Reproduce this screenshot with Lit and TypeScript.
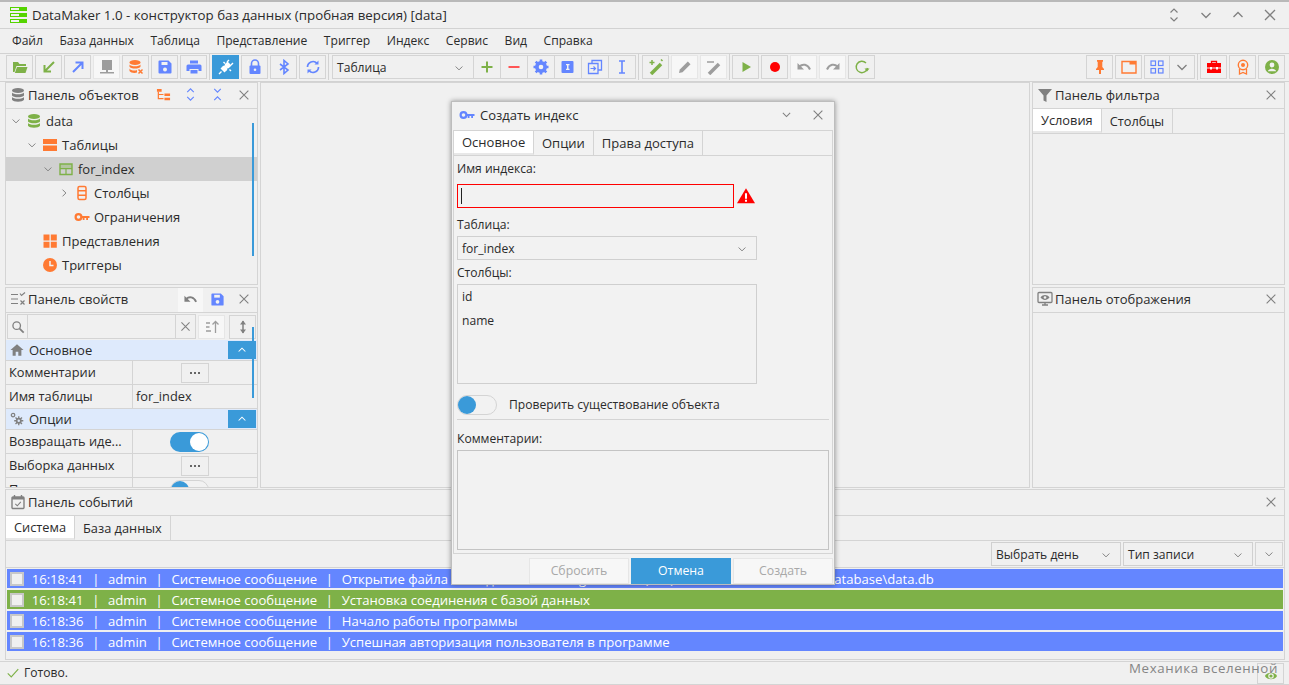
import { html, svg, css, LitElement } from "lit";
import { customElement } from "lit/decorators.js";

const OR = "#ff7a33";
const BL = "#6486ff";
const GR = "#7eb148";
const GY = "#808080";

const ICONS: Record<string, any> = {
  folder: svg`<path d="M1 3h5l1.500 2H14v2H4.500L2.500 13H1z" fill="${GR}"/><path d="M5 8h10.500l-2 6H2.800z" fill="${GR}"/>`,
  arrowIn: svg`<path d="M13 3 4 12M3.500 6v6.500H10" fill="none" stroke="${GR}" stroke-width="2"/>`,
  arrowOut: svg`<path d="M3 13 12 4M5.500 3.500H12.500V10" fill="none" stroke="${BL}" stroke-width="2"/>`,
  network: svg`<path d="M3 1h10v10H3zM7 11h2v2H7zM1 13h14v1.500H1z" fill="${GY}"/>`,
  dbx: svg`<ellipse cx="7" cy="3.500" rx="5.500" ry="2.500" fill="${OR}"/><path d="M1.500 5.500c1 2.400 10 2.400 11 0v2.300c-1 2.400-10 2.400-11 0zM1.500 9.500c1 2.400 6 2.400 7.500 1.500v2.500c-2 .9-6.500.5-7.500-1.500z" fill="${OR}"/><path d="M10.500 10.500l4 4m0-4l-4 4" stroke="${OR}" stroke-width="1.500"/>`,
  save: svg`<path d="M2.500 1.500h9l3 3v9a1 1 0 0 1-1 1h-11a1 1 0 0 1-1-1v-11a1 1 0 0 1 1-1z" fill="${BL}"/><path d="M4.500 3h6v3h-6z" fill="#f2f2f2"/><circle cx="8" cy="10.500" r="2" fill="#f2f2f2"/>`,
  print: svg`<path d="M4 1.500h8v3H4zM2 5.500h12a1.500 1.500 0 0 1 1.500 1.500v5H12.500v-2h-9v2H.5V7A1.500 1.500 0 0 1 2 5.500zM4.500 11h7v3.500h-7z" fill="${BL}"/>`,
  plug: svg`<g fill="#fff"><path d="M9.500 2.500l4 4-2.300 2.300a2 2 0 0 1-2.800 0L7.200 7.600a2 2 0 0 1 0-2.800z"/><path d="M6.500 13.500l-4-4 2.300-2.300a2 2 0 0 1 2.800 0l1.200 1.200a2 2 0 0 1 0 2.800z"/></g><path d="M11 1l-2 2m6 1l-2 2M1 15l2.500-2.500M7 4.500 5.500 3M11.500 10.500 13 12" stroke="#fff" stroke-width="1.400"/>`,
  lock: svg`<path d="M4.500 7V4.500a3.500 3.500 0 0 1 7 0V7" fill="none" stroke="${BL}" stroke-width="1.600"/><rect x="2.500" y="6.500" width="11" height="8.500" rx="1" fill="${BL}"/><circle cx="8" cy="10.800" r="1.300" fill="#f2f2f2"/>`,
  bt: svg`<path d="M4 5l8 6-4 3.500V1.500L12 5l-8 6" fill="none" stroke="${BL}" stroke-width="1.600"/>`,
  sync: svg`<path d="M2.500 8a5.500 5.500 0 0 1 9.500-3.700M13.500 8A5.500 5.500 0 0 1 4 11.700" fill="none" stroke="${BL}" stroke-width="1.700"/><path d="M13.500 1.500v4h-4zM2.500 14.500v-4h4z" fill="${BL}"/>`,
  plus: svg`<path d="M8 2.500v11M2.500 8h11" stroke="${GR}" stroke-width="2"/>`,
  minus: svg`<path d="M2.500 8h11" stroke="#f55" stroke-width="2"/>`,
  gear: svg`<circle cx="8" cy="8" r="4.500" fill="none" stroke="${BL}" stroke-width="3"/><path d="M8 .5v15M.5 8h15M2.700 2.700l10.600 10.600M13.300 2.700 2.700 13.300" stroke="${BL}" stroke-width="2.600"/><circle cx="8" cy="8" r="2.300" fill="#f2f2f2"/>`,
  info: svg`<rect x="1.500" y="2" width="12" height="12" rx="1" fill="${BL}"/><path d="M6 5h3.500v1.200H8.500v3.600h1V11H6V9.800h1V6.200H6z" fill="#f2f2f2"/>`,
  copy: svg`<path d="M5 4.500V1.500h9.500V11H11.500M1.500 4.500H11V14.500H1.500z" fill="none" stroke="${BL}" stroke-width="1.300"/><path d="M3.500 9.500h5m-2-2 2 2-2 2" fill="none" stroke="${BL}" stroke-width="1.200"/>`,
  cursor: svg`<path d="M5 2h6M5 14h6M8 2v12" fill="none" stroke="${BL}" stroke-width="1.600"/>`,
  wand: svg`<path d="M3 15 13 5" stroke="${GR}" stroke-width="3.500"/><path d="M4 1v5M1.500 3.500h5M13 .5l1.500 1.500" stroke="${GR}" stroke-width="1.500"/>`,
  pencil: svg`<path d="M2 14l.8-3.500L10.800 2.500l2.700 2.700-8 8z" fill="${GY}"/>`,
  wandGray: svg`<path d="M3 15 13 5" stroke="${GY}" stroke-width="3.500"/><path d="M1 3h7" stroke="${GY}" stroke-width="1.500"/>`,
  play: svg`<path d="M4.500 3v10l8.500-5z" fill="${GR}"/>`,
  rec: svg`<circle cx="8" cy="8" r="5" fill="#f00"/>`,
  undo: svg`<path d="M3.500 7.500c3-3 8-2.500 10.500 3" fill="none" stroke="${GY}" stroke-width="2"/><path d="M1.500 4v6.500H8z" fill="${GY}"/>`,
  redo: svg`<path d="M12.500 7.500c-3-3-8-2.500-10.500 3" fill="none" stroke="${GY}" stroke-width="2"/><path d="M14.500 4v6.500H8z" fill="${GY}"/>`,
  refresh: svg`<path d="M13.500 9A5.700 5.700 0 1 1 12 4" fill="none" stroke="${GR}" stroke-width="1.400"/><path d="M10.500 9.500h5L13 12.500z" fill="${GR}"/>`,
  pin: svg`<path d="M5 1h6v1.500l-.7.500v5l1.700 2v1H9v4H7v-4H4v-1l1.700-2V3L5 2.500z" fill="${OR}"/>`,
  win: svg`<path d="M1 2.500h14v11.500H1z" fill="none" stroke="${OR}" stroke-width="1.400"/><path d="M8.500 2.500H15v3H8.500z" fill="${OR}"/>`,
  grid: svg`<g fill="none" stroke="${BL}" stroke-width="1.200"><rect x="2" y="2" width="4.500" height="4.500"/><rect x="9.500" y="2" width="4.500" height="4.500"/><rect x="2" y="9.500" width="4.500" height="4.500"/><rect x="9.500" y="9.500" width="4.500" height="4.500"/></g>`,
  box: svg`<path d="M5.500 4V2.500h5V4" fill="none" stroke="#f00" stroke-width="1.300"/><path d="M1 4h14v4.500H1zM1 9.500h14V14H1z" fill="#f00"/><path d="M4 8h2v2.500H4zM10 8h2v2.500h-2z" fill="#fff"/>`,
  award: svg`<circle cx="8" cy="6" r="4.700" fill="none" stroke="${OR}" stroke-width="1.400"/><circle cx="8" cy="6" r="2" fill="${OR}"/><path d="M4.500 10v5l3.500-1.500 3.500 1.500v-5" fill="none" stroke="${OR}" stroke-width="1.300"/>`,
  user: svg`<circle cx="8" cy="8" r="7" fill="${GR}"/><circle cx="8" cy="6" r="2.400" fill="#f2f2f2"/><path d="M3.800 12.300c.8-3.400 7.600-3.400 8.400 0z" fill="#f2f2f2"/>`,
  db: svg`<ellipse cx="8" cy="3.500" rx="6" ry="2.500" fill="${GR}"/><path d="M2 5.500c1 2.400 11 2.400 12 0v3c-1 2.400-11 2.400-12 0zM2 10c1 2.400 11 2.400 12 0v2.700c-1 2.600-11 2.600-12 0z" fill="${GR}"/>`,
  dbGray: svg`<ellipse cx="8" cy="3.500" rx="6" ry="2.500" fill="${GY}"/><path d="M2 5.500c1 2.400 11 2.400 12 0v3c-1 2.400-11 2.400-12 0zM2 10c1 2.400 11 2.400 12 0v2.700c-1 2.600-11 2.600-12 0z" fill="${GY}"/>`,
  tables: svg`<path d="M1 2h14v5H1zM1 8.500h14V14H1z" fill="${OR}"/>`,
  table: svg`<path d="M2 3h12v10.500H2z" fill="none" stroke="${GR}" stroke-width="1.400"/><path d="M2 7h12v1.200H2zM7.400 7h1.200v6H7.400z" fill="${GR}"/><path d="M2 3h12v4H2z" fill="${GR}" opacity=".35"/>`,
  cols: svg`<rect x="4" y="1.500" width="8" height="13" rx="1.500" fill="none" stroke="${OR}" stroke-width="1.500"/><path d="M4 5.800h8M4 10.200h8" stroke="${OR}" stroke-width="1.500"/>`,
  key: svg`<circle cx="4.500" cy="8" r="2.900" fill="none" stroke="${OR}" stroke-width="2.200"/><path d="M7 7h8.500v2H14v2h-1.800V9H10.500v2H8.700V9H7z" fill="${OR}"/>`,
  keyBlue: svg`<circle cx="4.500" cy="8" r="2.900" fill="none" stroke="${BL}" stroke-width="2.200"/><path d="M7 7h8.500v2H14v2h-1.800V9H10.500v2H8.700V9H7z" fill="${BL}"/>`,
  views: svg`<path d="M1.500 1.500h6v6h-6zM8.800 1.500h6v6h-6zM1.500 8.800h6v6h-6zM8.800 8.800h6v6h-6z" fill="${OR}"/>`,
  clock: svg`<circle cx="8" cy="8" r="7" fill="${OR}"/><path d="M8 4v4.500h3.500" fill="none" stroke="#f2f2f2" stroke-width="1.500"/>`,
  treeOr: svg`<path d="M1 2h5v3H1zM9 7h6v2.500H9zM9 11.500h6V14H9z" fill="${OR}"/><path d="M2.500 5v7.500H8M2.500 8H8" fill="none" stroke="${OR}" stroke-width="1.300"/>`,
  expand: svg`<path d="M4.500 5.500 8 2l3.500 3.500M4.500 10.500 8 14l3.500-3.500" fill="none" stroke="${BL}" stroke-width="1.200"/>`,
  collapse: svg`<path d="M4.500 2 8 5.500 11.500 2M4.500 14 8 10.500 11.500 14" fill="none" stroke="${BL}" stroke-width="1.200"/>`,
  updown: svg`<path d="M4.500 5.500 8 2l3.500 3.500M4.500 10.500 8 14l3.500-3.500" fill="none" stroke="${GY}" stroke-width="1.200"/>`,
  chevDown: svg`<path d="M3.500 6 8 10.500 12.500 6" fill="none" stroke="${GY}" stroke-width="1.300"/>`,
  chevUp: svg`<path d="M3.500 10 8 5.500 12.500 10" fill="none" stroke="${GY}" stroke-width="1.300"/>`,
  chevUpW: svg`<path d="M3.500 10 8 5.500 12.500 10" fill="none" stroke="#fff" stroke-width="1.400"/>`,
  chevRight: svg`<path d="M6 3.500 10.500 8 6 12.500" fill="none" stroke="${GY}" stroke-width="1.300"/>`,
  close: svg`<path d="M3 3l10 10M13 3 3 13" stroke="${GY}" stroke-width="1.300"/>`,
  props: svg`<path d="M1 3.500h7M1 8h7M1 12.500h7" stroke="${GY}" stroke-width="1.200"/><path d="M10 2.500l1.500 2L15 1.500M10.500 9.500l4 4m0-4-4 4" fill="none" stroke="${GY}" stroke-width="1.200"/>`,
  search: svg`<circle cx="6.500" cy="6.500" r="4.300" fill="none" stroke="${GY}" stroke-width="1.500"/><path d="M9.800 9.800 14.500 14.500" stroke="${GY}" stroke-width="2"/>`,
  sortUp: svg`<path d="M2 4h4M2 8h3.500M2 12h5M11.500 14V3M8.500 5.500l3-3 3 3" fill="none" stroke="${GY}" stroke-width="1.300"/>`,
  resize: svg`<path d="M8 2v12" stroke="${GY}" stroke-width="1.500"/><path d="M5 5.500 8 1.500l3 4zM5 10.500l3 4 3-4z" fill="${GY}"/>`,
  home: svg`<path d="M8 1.500 15.500 8H13v6.500H9.500V10h-3v4.500H3V8H.5z" fill="${GY}"/>`,
  cogs: svg`<circle cx="3.500" cy="3.500" r="2" fill="none" stroke="${GY}" stroke-width="1.400"/><circle cx="10" cy="10" r="3.300" fill="${GY}"/><path d="M10 4.800v10.400M4.800 10h10.400M6.300 6.300l7.400 7.400M13.700 6.300l-7.400 7.400" stroke="${GY}" stroke-width="1.500"/><circle cx="10" cy="10" r="1.400" fill="#deeafc"/>`,
  filter: svg`<path d="M1 2h14L9.500 8.500V15l-3-1.500v-5z" fill="${GY}"/>`,
  monitor: svg`<rect x="1" y="1.500" width="14" height="10" rx="1" fill="none" stroke="${GY}" stroke-width="1.300"/><path d="M3.500 6.500C6 3.300 10 3.300 12.500 6.500 10 9.700 6 9.700 3.500 6.500z" fill="${GY}"/><circle cx="8" cy="6.500" r="1.300" fill="#f2f2f2"/><path d="M5 14h6M8 11.500V14" stroke="${GY}" stroke-width="1.300"/>`,
  calendar: svg`<rect x="2" y="3" width="12" height="11.500" rx="1" fill="none" stroke="${GY}" stroke-width="1.400"/><path d="M2 3h12v2.500H2z" fill="${GY}"/><path d="M4.500 1v2M11.500 1v2" stroke="${GY}" stroke-width="1.400"/><path d="M5.300 9.800l2 2 3.500-4" fill="none" stroke="${GY}" stroke-width="1.100"/>`,
  warn: svg`<path d="M8 1 16 14.500H0z" fill="#f00"/><path d="M7.100 5.500h1.800v5H7.100zM7.100 11.400h1.800v1.700H7.100z" fill="#fff"/>`,
  check: svg`<path d="M2 8.500 6 12.500 14 3.500" fill="none" stroke="${GR}" stroke-width="1.300"/>`,
  eye: svg`<path d="M1 8c3-5 11-5 14 0-3 5-11 5-14 0z" fill="${GR}"/><circle cx="8" cy="8" r="2.500" fill="none" stroke="#f2f2f2" stroke-width="1.300"/>`,
};

const icon = (name: string, size = 16) =>
  html`<svg class="ic" width=${size} height=${size} viewBox="0 0 16 16">${ICONS[name]}</svg>`;

const MENU = ["Файл", "База данных", "Таблица", "Представление", "Триггер", "Индекс", "Сервис", "Вид", "Справка"];
const TREE = [
  { level: 0, arrow: "chevDown", ic: "db", text: "data" },
  { level: 1, arrow: "chevDown", ic: "tables", text: "Таблицы" },
  { level: 2, arrow: "chevDown", ic: "table", text: "for_index", active: true },
  { level: 3, arrow: "chevRight", ic: "cols", text: "Столбцы" },
  { level: 3, arrow: "", ic: "key", text: "Ограничения" },
  { level: 1, arrow: "", ic: "views", text: "Представления" },
  { level: 1, arrow: "", ic: "clock", text: "Триггеры" },
];
const LOG = [
  { c: "blue", t: "16:18:41", m: "Открытие файла базы данных: C:\\Program Files (x86)\\DataMaker 1.0\\services\\database\\data.db" },
  { c: "green", t: "16:18:41", m: "Установка соединения с базой данных" },
  { c: "blue", t: "16:18:36", m: "Начало работы программы" },
  { c: "blue", t: "16:18:36", m: "Успешная авторизация пользователя в программе" },
];

@customElement("app-root")
export class AppRoot extends LitElement {
  static styles = css`
    :host {
      display: block;
      position: relative;
      width: 1289px;
      height: 685px;
      overflow: hidden;
      background: #f0f0f0;
      color: #2b2b2b;
      font: 12.1px/16px "Open Sans", "Noto Sans", sans-serif;
    }
    * { box-sizing: border-box; }
    .ic { display: block; flex: none; }

    .strip { height: 2px; background: #b9b9b9; }
    .title {
      height: 27px;
      display: flex;
      align-items: center;
      padding: 0 11px 0 10px;
      border-bottom: 1px solid #d2d2d2;
      font-size: 13.3px;
    }
    .logo { width: 17px; margin-right: 5px; display: flex; flex-direction: column; gap: 2px; }
    .logo i { display: block; height: 4px; background: #55d400; padding: 1px; }
    .logo i::before { content: ""; display: block; width: 8px; height: 2px; background: #f2f2f2; }
    .title .t { flex: 1; }
    .winbtns { display: flex; gap: 16px; }

    .menu { height: 25px; display: flex; align-items: center; gap: 16.5px; padding-left: 12px; border-bottom: 1px solid #d2d2d2; }

    .toolbar { height: 28px; display: flex; align-items: flex-start; gap: 2px; padding: 1px 4px 0 6px; border-bottom: 1px solid #d2d2d2; }
    .tb {
      width: 27px;
      height: 24px;
      display: flex;
      align-items: center;
      justify-content: center;
      border: 1px solid #d4d4d4;
      flex: none;
    }
    .tb.off { background: #f7f7f7; border-color: #e6e6e6; }
    .tb.off .ic { opacity: 0.75; }
    .tb.on { background: #3a9ad9; border-color: #3a9ad9; }
    .tsep { width: 1px; height: 26px; background: #d2d2d2; margin-top: -1px; flex: none; }
    .tsep.w { margin-right: 1px; }
    .tcombo {
      width: 142px;
      height: 24px;
      display: flex;
      align-items: center;
      justify-content: space-between;
      padding: 1px 8px 0 4px;
      border: 1px solid #d4d4d4;
      flex: none;
    }
    .joined { display: flex; }
    .joined .tb { margin-left: -1px; }
    .joined.l { margin-left: -2px; }
    .joined.l .tb { width: 28px; }
    .joined.r { margin-left: 1px; }
    .joined.r .tb { width: 26px; }
    .spacer { flex: 1; }

    .main {
      height: 406px;
      padding: 0 4px 0 5px;
      display: grid;
      grid-template-columns: 253px 1fr 253px;
      column-gap: 2px;
    }
    .col { display: grid; grid-template-rows: 203px 201px; row-gap: 2px; min-height: 0; }
    .center { border: 1px solid #d4d4d4; height: 406px; }
    .panel { position: relative; border: 1px solid #d4d4d4; overflow: hidden; min-height: 0; }
    .phead {
      height: 26px;
      display: flex;
      align-items: center;
      gap: 2px;
      padding: 0 6px 2px 4px;
      border-bottom: 1px solid #d4d4d4;
      font-size: 13px;
    }
    .panel + .panel .phead { height: 25px; }
    .phead .grow { flex: 1; }
    .phead .acts { display: flex; align-items: center; gap: 12px; }
    .undo { box-shadow: 0 0 0 5px #f7f7f7; background: #f7f7f7; }

    .row { height: 24px; display: flex; align-items: center; font-size: 13px; }
    .row.active { background: #d0d0d0; }
    .row .arrow { width: 12px; flex: none; margin-right: 4px; }
    .row .label { margin-left: 4px; }
    .bar { position: absolute; width: 2px; background: #3a9ad9; right: 3px; }
    .bar.b1 { top: 40px; height: 133px; }
    .bar.b2 { top: 39px; height: 71px; }

    .search { height: 27px; display: flex; align-items: center; padding: 0 1px; gap: 2px; }
    .sbox { width: 189px; height: 25px; display: flex; border: 1px solid #d4d4d4; }
    .sbox .a { width: 20px; display: flex; align-items: center; justify-content: center; border-right: 1px solid #d4d4d4; }
    .sbox .b { flex: 1; }
    .sbox .c { width: 20px; display: flex; align-items: center; justify-content: center; border-left: 1px solid #d4d4d4; }
    .search .last { margin-left: 2px; }
    .section {
      position: relative;
      height: 21px;
      display: flex;
      align-items: center;
      gap: 5px;
      padding-left: 4px;
      background: #deeafc;
      border-bottom: 1px solid #d4d4d4;
      font-size: 13px;
    }
    .fold {
      position: absolute;
      right: 1px;
      top: 1px;
      width: 28px;
      height: 18px;
      background: #3a9ad9;
      display: flex;
      align-items: center;
      justify-content: center;
    }
    .prop { display: grid; grid-template-columns: 126px 1fr; height: 24px; border-bottom: 1px solid #d4d4d4; font-size: 12.8px; }
    .prop > div { display: flex; align-items: center; padding: 0 0 2px 3px; white-space: nowrap; overflow: hidden; }
    .prop > div + div { border-left: 1px solid #d4d4d4; }
    .prop .v { justify-content: center; padding: 0; }
    .prop .v.txt { justify-content: flex-start; padding: 0 0 2px 3px; }
    .prop .toggle { margin-right: 12px; }
    .dots { width: 28px; height: 20px; border: 1px solid #d4d4d4; display: flex; align-items: center; justify-content: center; gap: 2px; }
    .dots i { width: 2px; height: 2px; background: #666; }
    .toggle { position: relative; width: 39px; height: 20px; border-radius: 10px; background: #3a9ad9; flex: none; }
    .toggle::after { content: ""; position: absolute; top: 1px; right: 1px; width: 18px; height: 18px; border-radius: 50%; background: #fff; }
    .toggle.off { background: #f2f2f2; border: 1px solid #d4d4d4; }
    .toggle.off::after { left: 0; right: auto; top: 0; background: #3a9ad9; }

    .tabs { display: flex; height: 25px; border-bottom: 1px solid #d4d4d4; font-size: 12.8px; }
    .tab { display: flex; align-items: center; padding: 0 8px; border-right: 1px solid #d4d4d4; height: 24px; }
    .tab.sel { background: #fff; border-bottom: 2px solid #e8e8e8; }

    .events { margin: 1px 4px 0 5px; height: 171px; border: 1px solid #d4d4d4; }
    .etools { height: 27px; display: flex; align-items: center; justify-content: flex-end; gap: 2px; padding-right: 1px; border-bottom: 1px solid #d4d4d4; }
    .dd {
      height: 24px;
      display: flex;
      align-items: center;
      justify-content: space-between;
      padding: 1px 8px 0 4px;
      border: 1px solid #d0d0d0;
    }
    .log { padding: 1px 1px 0 1px; display: flex; flex-direction: column; gap: 2px; }
    .lrow { height: 19px; display: flex; align-items: center; gap: 8.7px; color: #fff; font-size: 13.1px; padding-left: 3px; white-space: nowrap; overflow: hidden; }
    .lrow.blue { background: #6486ff; }
    .lrow.green { background: #7eb148; }
    .lrow .box { width: 14px; height: 14px; background: #f0f0f0; border: 2px solid #c8c8c8; flex: none; margin-right: -1px; }
    .status { height: 24px; margin-top: 1px; display: flex; align-items: center; gap: 4px; padding-left: 6px; border-top: 1px solid #d4d4d4; border-bottom: 1px solid #d4d4d4; position: relative; }
    .eyebtn { position: absolute; right: 5px; top: 1px; width: 27px; height: 21px; border: 1px solid #d4d4d4; display: flex; align-items: flex-end; justify-content: center; }
    .mark { position: absolute; right: 11px; bottom: 9px; color: #858585; font-size: 13.3px; letter-spacing: .6px; }

    .dialog {
      position: absolute;
      left: 451px;
      top: 101px;
      width: 384px;
      height: 484px;
      background: #f2f2f2;
      border: 1px solid #bdbdbd;
      box-shadow: 0 0 5px rgba(0, 0, 0, 0.4);
      display: flex;
      flex-direction: column;
    }
    .dhead { height: 26px; display: flex; align-items: center; padding: 0 9px 0 7px; gap: 5px; font-size: 13px; flex: none; }
    .dhead .grow { flex: 1; }
    .dhead .acts { display: flex; gap: 18px; }
    .dbody { margin: 2px 1px 0; height: 424px; border: 1px solid #d4d4d4; flex: none; }
    .dbody .tabs { font-size: 13px; }
    .form { padding: 0 3px; }
    .lbl { height: 24px; display: flex; align-items: center; padding-top: 2px; }
    .nameline { display: flex; align-items: center; gap: 3px; height: 24px; margin-top: 4px; }
    .err { width: 277px; height: 24px; border: 1px solid #f00; padding-left: 3px; display: flex; align-items: center; }
    .err i { width: 1px; height: 16px; background: #222; }
    .fwide { width: 300px; }
    .list { height: 100px; border: 1px solid #cfcfcf; }
    .list div { height: 24px; display: flex; align-items: center; padding-left: 4px; }
    .check { display: flex; align-items: center; gap: 12px; margin-top: 11px; }
    .check .toggle { width: 40px; }
    .hr { height: 1px; background: #d4d4d4; margin-top: 4px; width: 372px; }
    .gap { margin-top: 6px; }
    .gap4 { margin-top: 4px; }
    .area { height: 100px; width: 372px; border: 1px solid #c4c4c4; }
    .dfoot { flex: 1; display: flex; justify-content: flex-end; align-items: center; gap: 2px; padding: 3px 1px 0 0; }
    .btn { width: 100px; height: 26px; display: flex; align-items: center; justify-content: center; border: 1px solid #e6e6e6; background: #f7f7f7; color: #a8a8a8; font-size: 12.3px; }
    .btn.primary { background: #3a9ad9; border-color: #3a9ad9; color: #fff; }
    .w80 { width: 80px; }
    .w130 { width: 130px; }
    .w28 { width: 28px; }
  `;

  private tb(name: string, mod = "") {
    return html`<div class="tb ${mod}">${icon(name)}</div>`;
  }

  private objectsPanel() {
    return html`<div class="panel">
      <div class="phead">
        ${icon("dbGray")}<span class="grow">Панель объектов</span>
        <div class="acts">
          ${icon("treeOr", 15)}${icon("expand", 15)}${icon("collapse", 15)}${icon("close", 14)}
        </div>
      </div>
      ${TREE.map(
        (r) => html`<div class="row ${r.active ? "active" : ""}" style="padding-left:${4 + r.level * 16}px">
          <span class="arrow">${r.arrow ? icon(r.arrow, 12) : ""}</span>${icon(r.ic)}<span class="label">${r.text}</span>
        </div>`
      )}
      <div class="bar b1"></div>
    </div>`;
  }

  private propsPanel() {
    const dots = html`<div class="dots"><i></i><i></i><i></i></div>`;
    return html`<div class="panel">
      <div class="phead">
        ${icon("props")}<span class="grow">Панель свойств</span>
        <div class="acts"><span class="undo">${icon("undo", 15)}</span>${icon("save", 15)}${icon("close", 14)}</div>
      </div>
      <div class="search">
        <div class="sbox">
          <div class="a">${icon("search", 14)}</div><div class="b"></div><div class="c">${icon("close", 13)}</div>
        </div>
        <div class="tb off">${icon("sortUp")}</div>
        <div class="tb last">${icon("resize")}</div>
      </div>
      <div class="section">${icon("home", 14)}<span>Основное</span><div class="fold">${icon("chevUpW", 12)}</div></div>
      <div class="prop"><div>Комментарии</div><div class="v">${dots}</div></div>
      <div class="prop"><div>Имя таблицы</div><div class="v txt">for_index</div></div>
      <div class="section">${icon("cogs", 14)}<span>Опции</span><div class="fold">${icon("chevUpW", 12)}</div></div>
      <div class="prop"><div>Возвращать иде...</div><div class="v"><div class="toggle"></div></div></div>
      <div class="prop"><div>Выборка данных</div><div class="v">${dots}</div></div>
      <div class="prop"><div>Проверять</div><div class="v"><div class="toggle off"></div></div></div>
      <div class="bar b2"></div>
    </div>`;
  }

  private dialog() {
    return html`<div class="dialog">
      <div class="dhead">
        ${icon("keyBlue")}<span class="grow">Создать индекс</span>
        <div class="acts">${icon("chevDown", 13)}${icon("close", 14)}</div>
      </div>
      <div class="dbody">
        <div class="tabs">
          <div class="tab sel w80">Основное</div>
          <div class="tab">Опции</div>
          <div class="tab">Права доступа</div>
        </div>
        <div class="form">
          <div class="lbl">Имя индекса:</div>
          <div class="nameline">
            <div class="err"><i></i></div>
            ${icon("warn", 18)}
          </div>
          <div class="lbl gap4">Таблица:</div>
          <div class="dd fwide">for_index ${icon("chevDown", 12)}</div>
          <div class="lbl">Столбцы:</div>
          <div class="list fwide"><div>id</div><div>name</div></div>
          <div class="check"><div class="toggle off"></div><span>Проверить существование объекта</span></div>
          <div class="hr"></div>
          <div class="lbl gap">Комментарии:</div>
          <div class="area"></div>
        </div>
      </div>
      <div class="dfoot">
        <div class="btn">Сбросить</div>
        <div class="btn primary">Отмена</div>
        <div class="btn">Создать</div>
      </div>
    </div>`;
  }

  render() {
    return html`
      <div class="strip"></div>
      <div class="title">
        <div class="logo"><i></i><i></i><i></i></div>
        <span class="t">DataMaker 1.0 - конструктор баз данных (пробная версия) [data]</span>
        <div class="winbtns">${icon("updown")}${icon("chevDown")}${icon("chevUp")}${icon("close")}</div>
      </div>
      <div class="menu">${MENU.map((m) => html`<span>${m}</span>`)}</div>
      <div class="toolbar">
        ${this.tb("folder")}${this.tb("arrowIn")}${this.tb("arrowOut")}${this.tb("network", "off")}${this.tb("dbx")}${this.tb("save")}${this.tb("print")}
        <div class="tsep"></div>
        ${this.tb("plug", "on")}${this.tb("lock")}${this.tb("bt")}${this.tb("sync")}
        <div class="tsep w"></div>
        <div class="tcombo">Таблица ${icon("chevDown", 12)}</div>
        <div class="joined l">
          ${this.tb("plus")}${this.tb("minus")}${this.tb("gear")}${this.tb("info")}${this.tb("copy")}${this.tb("cursor")}
        </div>
        <div class="tsep w"></div>
        ${this.tb("wand")}${this.tb("pencil", "off")}${this.tb("wandGray", "off")}
        <div class="tsep"></div>
        ${this.tb("play")}${this.tb("rec")}${this.tb("undo", "off")}${this.tb("redo", "off")}${this.tb("refresh")}
        <div class="spacer"></div>
        ${this.tb("pin")}${this.tb("win")}
        <div class="joined r">${this.tb("grid")}${this.tb("chevDown")}</div>
        <div class="tsep"></div>
        ${this.tb("box")}${this.tb("award")}${this.tb("user")}
      </div>
      <div class="main">
        <div class="col">${this.objectsPanel()}${this.propsPanel()}</div>
        <div class="center"></div>
        <div class="col">
          <div class="panel">
            <div class="phead">${icon("filter")}<span class="grow">Панель фильтра</span>${icon("close", 14)}</div>
            <div class="tabs"><div class="tab sel">Условия</div><div class="tab">Столбцы</div></div>
          </div>
          <div class="panel">
            <div class="phead">${icon("monitor")}<span class="grow">Панель отображения</span>${icon("close", 14)}</div>
          </div>
        </div>
      </div>
      <div class="events">
        <div class="phead">${icon("calendar")}<span class="grow">Панель событий</span>${icon("close", 14)}</div>
        <div class="tabs"><div class="tab sel">Система</div><div class="tab">База данных</div></div>
        <div class="etools">
          <div class="dd w130">Выбрать день ${icon("chevDown", 12)}</div>
          <div class="dd w130">Тип записи ${icon("chevDown", 12)}</div>
          <div class="tb w28">${icon("chevDown", 12)}</div>
        </div>
        <div class="log">
          ${LOG.map(
            (l) => html`<div class="lrow ${l.c}">
              <span class="box"></span><span>${l.t}</span><span>|</span><span>admin</span><span>|</span><span>Системное сообщение</span><span>|</span><span>${l.m}</span>
            </div>`
          )}
        </div>
      </div>
      <div class="status">
        ${icon("check", 14)}<span>Готово.</span>
        <div class="eyebtn">${icon("eye", 14)}</div>
      </div>
      <div class="mark">Механика вселенной</div>
      ${this.dialog()}
    `;
  }
}
